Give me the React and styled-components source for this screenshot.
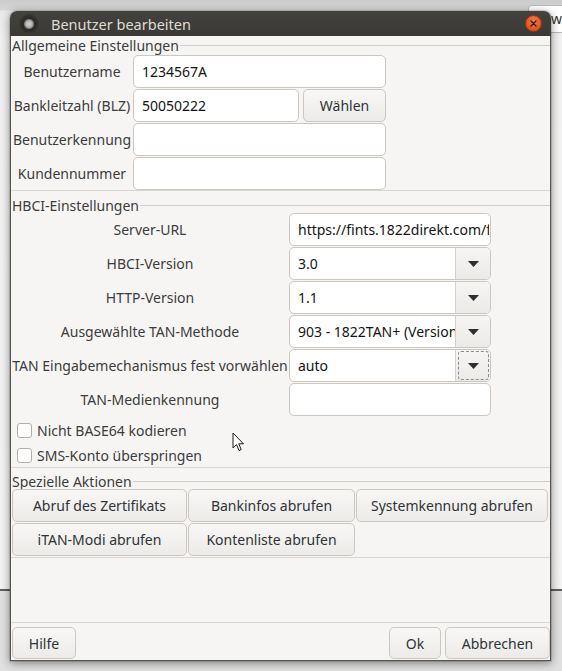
import React from 'react';
import styled, { createGlobalStyle, css } from 'styled-components';

const GlobalStyle = createGlobalStyle`
  html, body {
    margin: 0;
    padding: 0;
  }
  body {
    background: #e2e2e2;
    font-family: "Noto Sans", "DejaVu Sans", sans-serif;
    overflow: hidden;
  }
  * {
    box-sizing: border-box;
  }
`;

const Desktop = styled.div`
  position: relative;
  width: 562px;
  height: 671px;
  overflow: hidden;
  background: #e0e0e0;
`;

const BackWindow = styled.div`
  position: absolute;
  left: 0;
  top: 0;
  width: 100%;
  height: 591px;
  background: linear-gradient(#cbcbcb 0, #d6d6d6 10px, #e9e9e9 11px, #f1f1f1 40px, #f3f3f3 100%);
  border-bottom: 2px solid #5e5e5e;
`;

const BackField = styled.div`
  position: absolute;
  left: 528px;
  top: 5px;
  width: 70px;
  height: 28px;
  padding-left: 22px;
  background: #fff;
  border: 1px solid #b9b9b9;
  border-radius: 4px;
  font-size: 14px;
  line-height: 26px;
  color: #333;
`;

const Window = styled.div`
  position: absolute;
  left: 10px;
  top: 11px;
  width: 541px;
  height: 650px;
  display: flex;
  flex-direction: column;
  border-radius: 7px 7px 0 0;
  box-shadow: 0 2px 10px rgba(0, 0, 0, 0.45), 0 0 0 1px rgba(0, 0, 0, 0.12);
`;

const TitleBar = styled.div`
  flex: none;
  height: 25px;
  display: flex;
  align-items: center;
  padding: 0 9px 0 9px;
  background: linear-gradient(#43423e, #3a3935);
  border-radius: 7px 7px 0 0;
  color: #dfdbd2;
  font-size: 14.5px;
`;

const MenuIcon = styled.span`
  width: 20px;
  height: 20px;
  margin-right: 12px;
  border-radius: 50%;
  background: radial-gradient(circle, #d0d0d0 0, #b5b5b5 3px, #7d7d7d 4.5px, #2b2a27 5.5px, #31302c 8px, #3b3a36 10px);
`;

const Title = styled.span`
  flex: 1;
  white-space: nowrap;
`;

const CloseButton = styled.span`
  width: 17px;
  height: 17px;
  border-radius: 50%;
  background: radial-gradient(circle at 50% 35%, #f57d50, #e0501f 70%, #c8431a);
  border: 1px solid #9e3511;
  display: flex;
  align-items: center;
  justify-content: center;
`;

const Body = styled.div`
  flex: 1;
  display: flex;
  flex-direction: column;
  background: #f6f5f4;
  border: 1px solid #56544f;
  border-top: none;
  color: #3c3c3c;
  font-size: 14px;
`;

const Section = styled.section`
  border-bottom: 1px solid #d9d5d1;
  padding-bottom: ${p => p.$pb || 0}px;
`;

const SectionTitle = styled.div`
  display: flex;
  align-items: center;
  height: ${p => p.$h}px;
  margin-top: ${p => p.$mt || 0}px;
  padding-left: 1px;
  white-space: nowrap;
  color: #3c3c3c;

  &::after {
    content: '';
    flex: 1;
    height: 1px;
    margin-left: 1px;
    background: #d2cec9;
  }
`;

const FormGrid = styled.div`
  display: grid;
  grid-template-columns: ${p => p.$cols};
  grid-auto-rows: 33px;
  row-gap: 1px;
`;

const Label = styled.label`
  display: flex;
  align-items: center;
  justify-content: center;
  white-space: nowrap;
  color: #3c3c3c;
`;

const TextInput = styled.input`
  flex: 1;
  width: 100%;
  height: 33px;
  min-width: 0;
  margin: 0;
  padding: 0 1px 0 8px;
  background: #fff;
  border: 1px solid #cdc7c2;
  border-radius: 5px;
  font: inherit;
  font-size: 14px;
  color: #141414;
  outline: none;
`;

const FieldWithButton = styled.div`
  display: flex;
  gap: 4px;
`;

const Combo = styled.div`
  display: flex;
  height: 33px;
  background: #fff;
  border: 1px solid #cdc7c2;
  border-radius: 5px;
  overflow: hidden;
`;

const ComboText = styled.div`
  flex: 1;
  min-width: 0;
  display: flex;
  align-items: center;
  padding: 0 3px 0 8px;
  overflow: hidden;
  white-space: nowrap;
  color: #141414;
`;

const ComboButton = styled.div`
  position: relative;
  flex: none;
  width: 35px;
  display: flex;
  align-items: center;
  justify-content: center;
  background: linear-gradient(#f6f5f4, #eceae8);
  border-left: 1px solid #d6d1cc;

  ${p => p.$focused && css`
    &::after {
      content: '';
      position: absolute;
      inset: 1px 1px 1px 2px;
      border: 1px dashed #8c8c8c;
      border-radius: 3px;
    }
  `}
`;

const CheckList = styled.div`
  display: flex;
  flex-direction: column;
  gap: 1px;
  padding: 2px 0 0 6px;
`;

const CheckRow = styled.label`
  display: flex;
  align-items: center;
  gap: 5px;
  height: 24px;
  white-space: nowrap;
`;

const CheckBox = styled.span`
  width: 15px;
  height: 15px;
  background: #fff;
  border: 1px solid #b3aeaa;
  border-radius: 3px;
`;

const ActionGrid = styled.div`
  display: grid;
  grid-template-columns: 175px 167px 192px;
  grid-auto-rows: 33px;
  gap: 1px;
  padding-left: 1px;
`;

const Button = styled.button`
  flex: none;
  width: ${p => (p.$w ? `${p.$w}px` : 'auto')};
  height: 100%;
  margin: 0;
  padding: 0;
  background: linear-gradient(#f8f7f6, #edebe9);
  border: 1px solid #cdc7c2;
  border-radius: 5px;
  font: inherit;
  font-size: 14px;
  color: #2e3436;
  white-space: nowrap;
  cursor: default;
`;

const Spacer = styled.div`
  flex: 1;
`;

const Footer = styled.div`
  display: flex;
  gap: 4px;
  height: 38px;
  padding: 4px 0 1px 1px;
  border-top: 1px solid #d9d5d1;
`;

const FooterGap = styled.div`
  flex: 1;
`;

const Pointer = styled.svg`
  position: absolute;
  left: 232px;
  top: 432px;
`;

function DropArrow() {
  return (
    <svg width="11" height="6" viewBox="0 0 11 6">
      <path d="M0 0 H11 L5.5 6 Z" fill="#2e2e2e" />
    </svg>
  );
}

function ComboBox({ value, focused }) {
  return (
    <Combo>
      <ComboText>{value}</ComboText>
      <ComboButton $focused={focused}>
        <DropArrow />
      </ComboButton>
    </Combo>
  );
}

export default function App() {
  return (
    <Desktop>
      <GlobalStyle />
      <BackWindow />
      <BackField>we</BackField>

      <Window>
        <TitleBar>
          <MenuIcon />
          <Title>Benutzer bearbeiten</Title>
          <CloseButton>
            <svg width="7" height="7" viewBox="0 0 7 7">
              <path d="M1 1 L6 6 M6 1 L1 6" stroke="#3a1a0e" strokeWidth="1.3" strokeLinecap="round" />
            </svg>
          </CloseButton>
        </TitleBar>

        <Body>
          <Section>
            <SectionTitle $h={19}>Allgemeine Einstellungen</SectionTitle>
            <FormGrid $cols="122px 253px">
              <Label>Benutzername</Label>
              <TextInput defaultValue="1234567A" />
              <Label>Bankleitzahl (BLZ)</Label>
              <FieldWithButton>
                <TextInput defaultValue="50050222" />
                <Button $w={83}>Wählen</Button>
              </FieldWithButton>
              <Label>Benutzerkennung</Label>
              <TextInput />
              <Label>Kundennummer</Label>
              <TextInput />
            </FormGrid>
          </Section>

          <Section>
            <SectionTitle $h={16} $mt={6}>HBCI-Einstellungen</SectionTitle>
            <FormGrid $cols="278px 202px">
              <Label>Server-URL</Label>
              <TextInput defaultValue="https://fints.1822direkt.com/fints" />
              <Label>HBCI-Version</Label>
              <ComboBox value="3.0" />
              <Label>HTTP-Version</Label>
              <ComboBox value="1.1" />
              <Label>Ausgewählte TAN-Methode</Label>
              <ComboBox value="903 - 1822TAN+ (Version 6)" />
              <Label>TAN Eingabemechanismus fest vorwählen</Label>
              <ComboBox value="auto" focused />
              <Label>TAN-Medienkennung</Label>
              <TextInput />
            </FormGrid>
            <CheckList>
              <CheckRow>
                <CheckBox />
                Nicht BASE64 kodieren
              </CheckRow>
              <CheckRow>
                <CheckBox />
                SMS-Konto überspringen
              </CheckRow>
            </CheckList>
          </Section>

          <Section $pb={1}>
            <SectionTitle $h={16} $mt={5}>Spezielle Aktionen</SectionTitle>
            <ActionGrid>
              <Button>Abruf des Zertifikats</Button>
              <Button>Bankinfos abrufen</Button>
              <Button>Systemkennung abrufen</Button>
              <Button>iTAN-Modi abrufen</Button>
              <Button>Kontenliste abrufen</Button>
            </ActionGrid>
          </Section>

          <Spacer />

          <Footer>
            <Button $w={64}>Hilfe</Button>
            <FooterGap />
            <Button $w={52}>Ok</Button>
            <Button $w={105}>Abbrechen</Button>
          </Footer>
        </Body>
      </Window>

      <Pointer width="13" height="20" viewBox="0 0 13 20">
        <path d="M1 1 L1 16 L4.5 12.5 L7 18.5 L9.2 17.6 L6.8 11.8 L11.5 11.8 Z" fill="#fff" stroke="#1a1a1a" strokeWidth="1" strokeLinejoin="round" />
      </Pointer>
    </Desktop>
  );
}
